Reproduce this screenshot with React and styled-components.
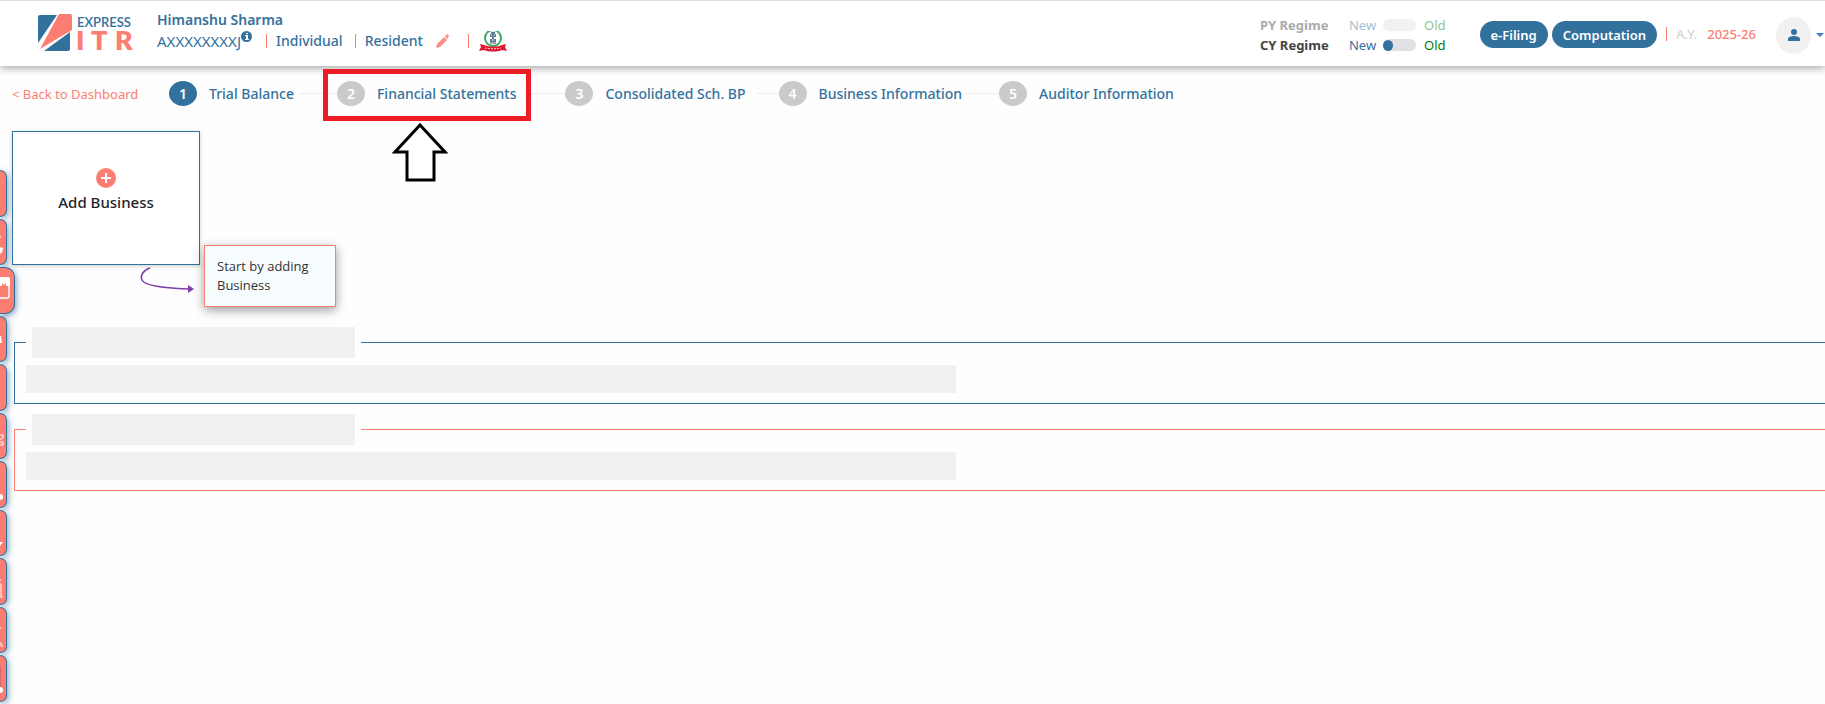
import React, { useState } from 'react'
import styled, { createGlobalStyle } from 'styled-components'

const BLUE = '#33719d'
const CORAL = '#fc7e73'

const steps = [
  { label: 'Trial Balance', line: 38, gap: 5 },
  { label: 'Financial Statements', line: 41, gap: 8, marked: true },
  { label: 'Consolidated Sch. BP', line: 23, gap: 10 },
  { label: 'Business Information', line: 35, gap: 2 },
  { label: 'Auditor Information' }
]

const tabs = [
  { name: 'Home' },
  {
    name: 'Clients',
    icon: (
      <>
        <path d='M0 15l1 2-1 1z' fill='#fff' />
        <path d='M0 27c1 1 2 0 3 1 0 3-1 5-3 6z' fill='#fff' />
      </>
    )
  },
  {
    name: 'Business',
    open: true,
    icon: (
      <>
        <path d='M0 9h8q2 0 2 2v7H6v-3l-2 2-2-2v3H0z' fill='#fff' />
        <path d='M9 16v12q0 2-2 2H0' fill='none' stroke='#fff' strokeWidth='1.5' />
      </>
    )
  },
  { name: 'Salary', icon: <path d='M0 19h1l1 7H0z' fill='#fff' /> },
  { name: 'House Property' },
  {
    name: 'Capital Gain',
    icon: (
      <path d='M0 21h3v3M0 25h2v-1M0 28h3v3H0' fill='none' stroke='#fff' strokeWidth='1' />
    )
  },
  { name: 'Other Income', icon: <circle cx='0' cy='34' r='3' fill='#fff' /> },
  { name: 'Deductions', icon: <path d='M0 31h3l-3 4z' fill='#fff' /> },
  {
    name: 'Taxes',
    icon: <path d='M0 20h1M0 24h1v12M0 37h3' fill='none' stroke='#fff' strokeWidth='1' />
  },
  {
    name: 'Reports',
    icon: <path d='M0 20h1M0 35h1v3h2' fill='none' stroke='#fff' strokeWidth='1' />
  },
  {
    name: 'Documents',
    icon: (
      <>
        <path d='M0 9h1v22H0z' fill='#d9676b' />
        <circle cx='0' cy='33' r='3' fill='#fff' />
      </>
    )
  }
]

const Logo = () => (
  <svg width='100' height='48' viewBox='0 -4 100 48' role='img' aria-label='Express ITR'>
    <path d='M1 4q0-2 2-2h17L1 30z' fill={BLUE} />
    <path d='M22 1h11q2 0 2 2v14L3 36z' fill={CORAL} />
    <path d='M33 19v17q0 2-2 2H7z' fill={BLUE} />
    <text x='40' y='14' fontSize='13' fontWeight='600' fill={BLUE} fontFamily='Lato, sans-serif'>
      EXPRESS
    </text>
    <text
      x='39 54 78'
      y='37'
      fontSize='27'
      fontWeight='800'
      fill={CORAL}
      fontFamily='Lato, sans-serif'
    >
      ITR
    </text>
  </svg>
)

const Emblem = () => (
  <svg width='30' height='22' viewBox='0 0 30 22' aria-hidden='true'>
    <circle cx='15' cy='8' r='8' fill='none' stroke='#3da866' strokeWidth='2' />
    <path d='M10 0h10' stroke='#fff' strokeWidth='2' />
    <path d='M13 2h4v2h1v3h-2v2h2v3h-6V9h2V7h-2V4h1z' fill='#5b7d97' />
    <path d='M13 5h1M16 5h1M14 10h2' stroke='#fff' strokeWidth='1' />
    <path d='M12 13h6' stroke='#44506b' strokeWidth='1' />
    <path d='M2 14l4 1c5 2 13 2 18 0l4-1-1 3 2 4-5-1c-5 2-13 2-18 0l-5 1 2-4z' fill='#e3172f' />
    <path d='M7 18c5 1 11 1 16 0' fill='none' stroke='#fbc9cd' strokeWidth='1' strokeDasharray='2 1' />
  </svg>
)

const App = () => {
  const [pyOld, setPyOld] = useState(false)
  const [cyOld, setCyOld] = useState(false)

  return (
    <Page>
      <GlobalStyle />
      <Header>
        <Logo />
        <Client>
          <ClientName>Himanshu Sharma</ClientName>
          <ClientRow>
            <Pan>
              AXXXXXXXXJ
              <svg width='11' height='11' viewBox='0 0 11 11' aria-hidden='true'>
                <circle cx='5.5' cy='5.5' r='5.5' fill={BLUE} />
                <path d='M5 2h2v1H5zM4 4h3v4h1v1H4V8h1V5H4z' fill='#fff' />
              </svg>
            </Pan>
            <Bar />
            <span>Individual</span>
            <Bar $left={12} />
            <span>Resident</span>
            <EditButton aria-label='Edit'>
              <svg width='13' height='14' viewBox='0 0 13 14'>
                <path d='M0 14l1-4 7-7 3 3-7 7zM9 2l1-1 1-1 2 2-1 2-1 1z' fill='#fd8d82' />
              </svg>
            </EditButton>
            <Bar $left={19} />
            <Emblem />
          </ClientRow>
        </Client>

        <Regimes>
          <RegimeRow $off>
            <strong>PY Regime</strong>
            <span>New</span>
            <Switch
              type='checkbox'
              aria-label='PY Regime'
              $off
              checked={pyOld}
              onChange={() => setPyOld(!pyOld)}
            />
            <Old>Old</Old>
          </RegimeRow>
          <RegimeRow>
            <strong>CY Regime</strong>
            <span>New</span>
            <Switch
              type='checkbox'
              aria-label='CY Regime'
              checked={cyOld}
              onChange={() => setCyOld(!cyOld)}
            />
            <Old>Old</Old>
          </RegimeRow>
        </Regimes>

        <Actions>
          <Pill>e-Filing</Pill>
          <Pill>Computation</Pill>
        </Actions>
        <Year>
          <Bar />
          <span>A.Y.</span>
          <b>2025-26</b>
        </Year>
        <UserButton aria-label='Account'>
          <Avatar>
            <svg width='12' height='12' viewBox='0 0 12 12'>
              <circle cx='6' cy='3' r='3' fill={BLUE} />
              <path d='M0 12v-2c0-2 3-3 6-3s6 1 6 3v2z' fill={BLUE} />
            </svg>
          </Avatar>
          <svg width='8' height='4' viewBox='0 0 8 4'>
            <path d='M0 0h8L4 4z' fill='#3f80c4' />
          </svg>
        </UserButton>
      </Header>

      <Stepper>
        <BackLink href='#dashboard'>&lt; Back to Dashboard</BackLink>
        {steps.map(({ label, line, gap, marked }, i) => (
          <React.Fragment key={label}>
            <Step>
              <StepNumber $active={i === 0}>{i + 1}</StepNumber>
              {label}
              {marked ? (
                <>
                  <Highlight />
                  <Pointer width='56' height='60' viewBox='0 0 56 60' aria-hidden='true'>
                    <path
                      d='M28 2L3 29h12v28h27V29h11z'
                      fill='#fff'
                      stroke='#000'
                      strokeWidth='3'
                    />
                  </Pointer>
                </>
              ) : null}
            </Step>
            {line ? <StepLine $width={line} $gap={gap} /> : null}
          </React.Fragment>
        ))}
      </Stepper>

      <Content>
        <AddCard>
          <svg width='20' height='20' viewBox='0 0 20 20' aria-hidden='true'>
            <circle cx='10' cy='10' r='10' fill={CORAL} />
            <path d='M10 5v10M5 10h10' stroke='#fff' strokeWidth='2' />
          </svg>
          Add Business
          <Curl width='54' height='28' viewBox='0 0 54 28' aria-hidden='true'>
            <path
              d='M10 2C3 4 0 10 2 14c2 5 20 8 46 9'
              fill='none'
              stroke='#7d3fa8'
              strokeWidth='1.6'
            />
            <path d='M48 19l6 4-6 4z' fill='#7d3fa8' />
          </Curl>
          <Hint>Start by adding Business</Hint>
        </AddCard>

        <Section $color={BLUE}>
          <SectionTitle />
          <Placeholder />
        </Section>
        <Section $color={CORAL}>
          <SectionTitle />
          <Placeholder />
        </Section>
      </Content>

      <Rail>
        {tabs.map(({ name, icon, open }) => (
          <RailTab key={name} aria-label={name} $open={open}>
            {icon ? (
              <svg width='10' height='44' viewBox='0 0 10 44'>
                {icon}
              </svg>
            ) : null}
          </RailTab>
        ))}
      </Rail>
    </Page>
  )
}

const GlobalStyle = createGlobalStyle`
  * {
    box-sizing: border-box;
  }
  body {
    margin: 0;
    background-color: #fefefe;
    color: #212529;
    font-family: 'Noto Sans', 'Open Sans', sans-serif;
    font-size: 14px;
  }
  button {
    padding: 0;
    border: 0;
    background: none;
    color: inherit;
    font: inherit;
    cursor: pointer;
  }
`

const Page = styled.div`
  min-height: 100vh;
  overflow: hidden;
`

const Header = styled.header`
  display: flex;
  align-items: center;
  height: 66px;
  padding-left: 37px;
  border-top: 1px solid #dcdfe9;
  background-color: white;
  box-shadow: 0 2px 8px rgba(0, 0, 0, 0.35);
  > svg {
    flex: none;
    margin-bottom: 2px;
  }
`

const Client = styled.div`
  margin: 0 0 6px 20px;
  color: ${BLUE};
  font-weight: 500;
  white-space: nowrap;
`

const ClientName = styled.div`
  line-height: 20px;
  font-weight: 600;
`

const ClientRow = styled.div`
  display: flex;
  align-items: center;
  height: 22px;
`

const Pan = styled.span`
  display: flex;
  margin-right: 14px;
  font-size: 15px;
  font-weight: 400;
`

const Bar = styled.i`
  width: 1px;
  height: 14px;
  margin: 0 9px 0 ${({ $left }) => $left || 0}px;
  background-color: ${CORAL};
`

const EditButton = styled.button`
  display: flex;
  margin-left: 13px;
`

const Regimes = styled.div`
  margin: 3px 0 0 auto;
`

const RegimeRow = styled.label`
  display: flex;
  align-items: center;
  height: 20px;
  color: ${BLUE};
  font-size: 13px;
  opacity: ${({ $off }) => ($off ? 0.45 : 1)};
  strong {
    width: 89px;
    color: #444;
  }
  span {
    width: 34px;
  }
`

const Old = styled.em`
  margin-left: 8px;
  color: green;
  font-style: normal;
`

const Switch = styled.input`
  appearance: none;
  display: flex;
  align-items: center;
  width: 33px;
  height: 12px;
  margin: 0;
  border-radius: 6px;
  background-color: #dfe1e4;
  &::before {
    content: '';
    width: 10px;
    height: 11px;
    border-radius: 50%;
    background-color: ${({ $off }) => ($off ? 'transparent' : BLUE)};
  }
  &:checked {
    justify-content: flex-end;
  }
`

const Actions = styled.div`
  display: flex;
  gap: 4px;
  margin: 2px 9px 0 34px;
`

const Pill = styled.button`
  height: 27px;
  padding: 0 11px;
  border-radius: 14px;
  background-color: ${BLUE};
  color: white;
  font-size: 13px;
  font-weight: 600;
`

const Year = styled.div`
  display: flex;
  align-items: center;
  color: #cfcfcf;
  font-size: 13px;
  b {
    margin-left: 10px;
    color: ${CORAL};
    font-weight: 500;
  }
`

const UserButton = styled.button`
  display: flex;
  align-items: center;
  gap: 5px;
  margin: 3px 1px 0 20px;
`

const Avatar = styled.span`
  display: flex;
  align-items: center;
  justify-content: center;
  width: 35px;
  height: 37px;
  border-radius: 50%;
  background-color: #f1f1f1;
`

const Stepper = styled.nav`
  display: flex;
  align-items: center;
  height: 57px;
  padding: 0 0 2px 12px;
  white-space: nowrap;
`

const BackLink = styled.a`
  width: 157px;
  color: ${CORAL};
  font-size: 13px;
  text-decoration: none;
`

const Step = styled.button`
  position: relative;
  display: flex;
  align-items: center;
  gap: 12px;
  color: ${BLUE};
  font-weight: 500;
`

const StepNumber = styled.span`
  width: 28px;
  height: 25px;
  border-radius: 50%;
  background-color: ${({ $active }) => ($active ? BLUE : '#cacaca')};
  color: white;
  line-height: 25px;
  font-weight: 600;
`

const StepLine = styled.i`
  width: ${({ $width }) => $width}px;
  height: 1px;
  margin-left: ${({ $gap }) => $gap}px;
  background-color: #eee;
`

const Highlight = styled.span`
  position: absolute;
  inset: -12px -15px -15px -14px;
  border: 5px solid #ed1c24;
`

const Pointer = styled.svg`
  position: absolute;
  top: 42px;
  left: 55px;
`

const Content = styled.main`
  padding: 8px 0 0 12px;
`

const AddCard = styled.button`
  position: relative;
  display: flex;
  flex-direction: column;
  align-items: center;
  justify-content: center;
  gap: 4px;
  width: 188px;
  height: 134px;
  margin-bottom: 62px;
  padding-bottom: 16px;
  border: 1px solid ${BLUE};
  background-color: white;
  box-shadow: 0 1px 4px rgba(0, 0, 0, 0.2);
  font-size: 15px;
  font-weight: 500;
`

const Curl = styled.svg`
  position: absolute;
  top: 134px;
  left: 127px;
`

const Hint = styled.span`
  position: absolute;
  top: 113px;
  left: 191px;
  width: 132px;
  padding: 11px 12px;
  border: 1px solid ${CORAL};
  background-color: #f7fcff;
  box-shadow: 0 3px 10px rgba(0, 0, 0, 0.4);
  color: #333;
  font-family: 'Open Sans', 'Noto Sans', sans-serif;
  font-size: 13px;
  line-height: 19px;
  text-align: left;
`

const Section = styled.fieldset`
  margin: 0 -2px 10px 2px;
  padding: 7px 11px 10px;
  border: 1px solid ${({ $color }) => $color};
`

const SectionTitle = styled.legend`
  width: 335px;
  height: 31px;
  padding: 0 6px;
  &::before {
    content: '';
    display: block;
    height: 31px;
    background-color: #f2f0f1;
  }
`

const Placeholder = styled.div`
  width: 52%;
  height: 28px;
  background-color: #f2f0f1;
`

const Rail = styled.nav`
  position: fixed;
  top: 170px;
  bottom: 2px;
  left: 0;
  display: grid;
  grid-auto-rows: 1fr;
  gap: 2px;
`

const RailTab = styled.button`
  display: flex;
  align-items: center;
  width: ${({ $open }) => ($open ? 15 : 7)}px;
  overflow: hidden;
  border: 1px solid ${BLUE};
  border-left: 0;
  border-radius: 0 ${({ $open }) => ($open ? '10px 10px' : '7px 7px')} 0;
  background-color: ${CORAL};
  box-shadow: 1px 2px 6px rgba(51, 113, 157, 0.7);
  svg {
    flex: none;
  }
`

export default App
